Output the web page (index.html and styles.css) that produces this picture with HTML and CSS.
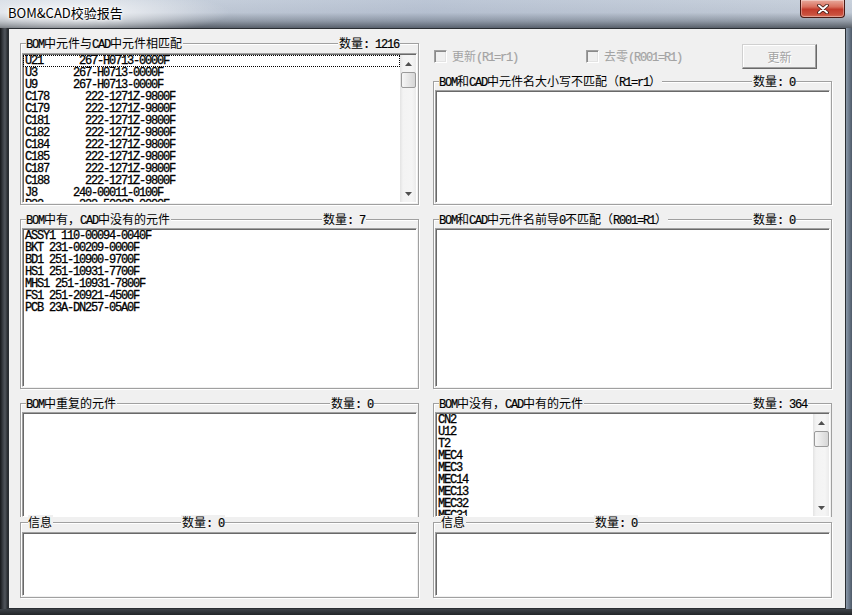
FILE: index.html
```html
<!DOCTYPE html>
<html lang="zh-CN">
<head>
<meta charset="utf-8">
<title>BOM&amp;CAD校验报告</title>
<link rel="stylesheet" href="styles.css">
</head>
<body>
<div class="window">
  <div class="titlebar">
    <span class="title">BOM&amp;CAD校验报告</span>
    <button class="close" aria-label="关闭">
      <svg width="12" height="10" viewBox="0 0 12 10"><path d="M2 1.5 L10 8.5 M10 1.5 L2 8.5" stroke="#3a1510" stroke-width="3.6" stroke-linecap="round"/><path d="M2 1.5 L10 8.5 M10 1.5 L2 8.5" stroke="#ffffff" stroke-width="2" stroke-linecap="round"/></svg>
    </button>
  </div>
  <div class="frame-left"></div>
  <div class="client">
    <div class="col col-left">
      <div class="group g1">
        <span class="gtitle"><span class="m">BOM</span>中元件与<span class="m">CAD</span>中元件相匹配</span>
        <span class="gcount c1">数量<span class="m">: 1216</span></span>
        <div class="listbox">
          <div class="items">
            <div class="row focus">U21      267-H0713-0000F</div>
            <div class="row">U3      267-H0713-0000F</div>
            <div class="row">U9      267-H0713-0000F</div>
            <div class="row">C178      222-1271Z-9800F</div>
            <div class="row">C179      222-1271Z-9800F</div>
            <div class="row">C181      222-1271Z-9800F</div>
            <div class="row">C182      222-1271Z-9800F</div>
            <div class="row">C184      222-1271Z-9800F</div>
            <div class="row">C185      222-1271Z-9800F</div>
            <div class="row">C187      222-1271Z-9800F</div>
            <div class="row">C188      222-1271Z-9800F</div>
            <div class="row">J8      240-00011-0100F</div>
            <div class="row">R22      232-5022B-0000F</div>
          </div>
          <div class="vscroll">
            <div class="sbtn"><svg width="7" height="4" viewBox="0 0 7 4"><polygon points="0,4 7,4 3.5,0" fill="#505050"/></svg></div>
            <div class="thumb"></div>
            <div class="strack"></div>
            <div class="sbtn"><svg width="7" height="4" viewBox="0 0 7 4"><polygon points="0,0 7,0 3.5,4" fill="#505050"/></svg></div>
          </div>
        </div>
      </div>

      <div class="group g2">
        <span class="gtitle"><span class="m">BOM</span>中有，<span class="m">CAD</span>中没有的元件</span>
        <span class="gcount c2">数量<span class="m">: 7</span></span>
        <div class="listbox">
          <div class="items">
            <div class="row">ASSY1 110-00094-0040F</div>
            <div class="row">BKT 231-00209-0000F</div>
            <div class="row">BD1 251-10900-9700F</div>
            <div class="row">HS1 251-10931-7700F</div>
            <div class="row">MHS1 251-10931-7800F</div>
            <div class="row">FS1 251-20921-4500F</div>
            <div class="row">PCB 23A-DN257-05A0F</div>
          </div>
        </div>
      </div>

      <div class="group g3">
        <span class="gtitle"><span class="m">BOM</span>中重复的元件</span>
        <span class="gcount c3">数量<span class="m">: 0</span></span>
        <div class="listbox">
          <div class="items"></div>
        </div>
      </div>

      <div class="group info">
        <span class="gtitle ititle">信息</span>
        <span class="gcount ci">数量<span class="m">: 0</span></span>
        <div class="listbox">
          <div class="items"></div>
        </div>
      </div>
    </div>

    <div class="col col-right">
      <div class="toolbar">
        <label class="chk chk1"><span class="box"></span><span>更新<span class="m">(R1=r1)</span></span></label>
        <label class="chk chk2"><span class="box"></span><span>去零<span class="m">(R001=R1)</span></span></label>
        <button class="btn" disabled>更新</button>
      </div>

      <div class="group g4">
        <span class="gtitle"><span class="m">BOM</span>和<span class="m">CAD</span>中元件名大小写不匹配（<span class="m">R1=r1</span>）</span>
        <span class="gcount cr">数量<span class="m">: 0</span></span>
        <div class="listbox">
          <div class="items"></div>
        </div>
      </div>

      <div class="group g2">
        <span class="gtitle"><span class="m">BOM</span>和<span class="m">CAD</span>中元件名前导<span class="m">0</span>不匹配（<span class="m">R001=R1</span>）</span>
        <span class="gcount cr">数量<span class="m">: 0</span></span>
        <div class="listbox">
          <div class="items"></div>
        </div>
      </div>

      <div class="group g3">
        <span class="gtitle"><span class="m">BOM</span>中没有，<span class="m">CAD</span>中有的元件</span>
        <span class="gcount cr">数量<span class="m">: 364</span></span>
        <div class="listbox">
          <div class="items">
            <div class="row">CN2</div>
            <div class="row">U12</div>
            <div class="row">T2</div>
            <div class="row">MEC4</div>
            <div class="row">MEC3</div>
            <div class="row">MEC14</div>
            <div class="row">MEC13</div>
            <div class="row">MEC32</div>
            <div class="row">MEC31</div>
          </div>
          <div class="vscroll">
            <div class="sbtn"><svg width="7" height="4" viewBox="0 0 7 4"><polygon points="0,4 7,4 3.5,0" fill="#505050"/></svg></div>
            <div class="thumb"></div>
            <div class="strack"></div>
            <div class="sbtn"><svg width="7" height="4" viewBox="0 0 7 4"><polygon points="0,0 7,0 3.5,4" fill="#505050"/></svg></div>
          </div>
        </div>
      </div>

      <div class="group info">
        <span class="gtitle ititle">信息</span>
        <span class="gcount ci">数量<span class="m">: 0</span></span>
        <div class="listbox">
          <div class="items"></div>
        </div>
      </div>
    </div>
  </div>
  <div class="frame-right"></div>
  <div class="frame-bottom"></div>
</div>
</body>
</html>
```

FILE: styles.css
```css
* { box-sizing: border-box; }

html, body {
  margin: 0;
  padding: 0;
}

body {
  width: 852px;
  height: 615px;
  overflow: hidden;
  background: #2f3338;
  font-family: "Noto Sans CJK SC", "Noto Sans", sans-serif;
  font-size: 12px;
  color: #000;
}

.window {
  display: grid;
  grid-template-columns: 8px 838px 6px;
  grid-template-rows: 28px 581px 6px;
  width: 852px;
  height: 615px;
}

/* ---------- title bar ---------- */
.titlebar {
  grid-column: 1 / -1;
  display: flex;
  justify-content: space-between;
  align-items: flex-start;
  background:
    radial-gradient(ellipse 160px 24px at 70px 13px, rgba(255,255,255,0.9), rgba(255,255,255,0) 100%),
    linear-gradient(to right, rgba(120,140,170,0.0) 0, rgba(110,130,170,0.18) 50%, rgba(120,140,170,0.05) 100%),
    linear-gradient(to bottom, #cdd5df 0, #c4ccd7 45%, #949ca6 75%, #565c63 100%);
}

.title {
  padding: 5px 0 0 8px;
  font-size: 13px;
  line-height: 16px;
  color: #000;
  text-shadow: 0 0 6px #fff, 0 0 3px #fff, 0 0 2px #fff;
}

.close {
  width: 45px;
  height: 18px;
  margin-right: 7px;
  padding: 0;
  border: 1px solid #4a1a14;
  border-top: none;
  border-radius: 0 0 4px 4px;
  background: linear-gradient(to bottom, #e8aa9c 0, #d9705e 40%, #c23b2b 55%, #c9503d 85%, #d9705a 100%);
  box-shadow: inset 0 0 0 1px rgba(255,255,255,0.35);
  display: flex;
  align-items: center;
  justify-content: center;
}

.frame-left {
  background: linear-gradient(to right, #15171a 0, #3c4046 3px, #50555c 5px, #24272b 8px);
}

.frame-right {
  background: linear-gradient(to right, #8a98a8 0, #6c7a8b 3px, #4f5a68 6px);
}

.frame-bottom {
  grid-column: 1 / -1;
  background: linear-gradient(to bottom, #3d4248 0, #222528 100%);
}

/* ---------- client area ---------- */
.client {
  border: 1px solid #2a2e33;
  background: #f0f0f0;
  display: flex;
  padding-left: 11px;
  gap: 14px;
}

.col {
  width: 399px;
  display: flex;
  flex-direction: column;
}

.col-left { padding-top: 14px; }
.col-right { padding-top: 15px; }

/* ---------- group boxes ---------- */
.group {
  position: relative;
  border: 1px solid #a0a0a0;
  box-shadow: inset 1px 1px 0 #fff, 1px 1px 0 #fff;
  padding: 8px 1px 1px 1px;
  display: flex;
  flex-direction: column;
}

.g1 { height: 162px; padding-top: 9px; }
.g2 { height: 170px; margin-top: 14px; }
.g3 { height: 114px; margin-top: 14px; border-bottom: none; padding-bottom: 0; box-shadow: inset 1px 1px 0 #fff; }
.g4 { height: 124px; margin-top: 12px; }
.info { height: 76px; margin-top: 5px; padding-top: 9px; }

.gtitle,
.gcount {
  position: absolute;
  top: -8px;
  line-height: 14px;
  background: #f0f0f0;
  white-space: nowrap;
}

.gtitle { left: 5px; padding-right: 1px; }
.ititle { left: 7px; }
.gcount { padding: 0 1px; }

.c1 { left: 317px; }
.c2 { left: 301px; }
.c3 { left: 309px; }
.cr { left: 318px; }
.ci { left: 160px; }

.m {
  font-family: "Liberation Mono", monospace;
  font-size: 12px;
  letter-spacing: -1.2px;
  -webkit-text-stroke: 0.2px currentColor;
}

/* ---------- list boxes ---------- */
.listbox {
  flex: 1;
  min-height: 0;
  background: #fff;
  border: 1px solid;
  border-color: #a0a0a0 #fff #fff #a0a0a0;
  box-shadow: inset 1px 1px 0 #696969;
  padding-top: 1px;
  display: flex;
  overflow: hidden;
}

.items {
  flex: 1;
  min-width: 0;
  overflow: hidden;
  font-family: "Liberation Mono", monospace;
  font-size: 12px;
  letter-spacing: -1.2px;
  line-height: 12px;
  color: #000;
  -webkit-text-stroke: 0.3px #000;
}

.row {
  height: 12px;
  padding-left: 2px;
  white-space: pre;
}

.row.focus {
  outline: 1px dotted #000;
  outline-offset: -1px;
}

.vscroll {
  width: 16px;
  display: flex;
  flex-direction: column;
  background: linear-gradient(to right, #e3e3e3 0, #f3f3f3 3px, #f5f5f5 12px, #ebebeb 16px);
}

.sbtn {
  height: 17px;
  display: flex;
  align-items: center;
  justify-content: center;
}

.thumb {
  height: 16px;
  width: 15px;
  margin-left: 1px;
  border: 1px solid #9a9a9a;
  border-radius: 2px;
  background: linear-gradient(to right, #f6f6f6 0, #e6e6e6 50%, #d6d6d6 100%);
}

.strack { flex: 1; }

/* ---------- toolbar ---------- */
.toolbar {
  height: 25px;
  display: flex;
  align-items: center;
}

.chk {
  display: flex;
  align-items: center;
  gap: 5px;
  color: #a3a3a3;
  white-space: nowrap;
  line-height: 14px;
}

.chk1 { margin-left: 1px; width: 152px; }
.chk2 { width: 156px; }

.box {
  width: 13px;
  height: 13px;
  border: 1px solid;
  border-color: #a0a0a0 #fff #fff #a0a0a0;
  box-shadow: inset 1px 1px 0 #8a8a8a, inset -1px -1px 0 #e3e3e3;
  background: #f0f0f0;
}

.btn {
  width: 75px;
  height: 25px;
  padding: 0;
  border: 1px solid;
  border-color: #d0d0d0 #696969 #696969 #d0d0d0;
  box-shadow: inset -1px -1px 0 #a0a0a0, inset 1px 1px 0 #fff;
  background: #f0f0f0;
  color: #a3a3a3;
  text-shadow: 1px 1px 0 #fff;
  font-family: "Noto Sans CJK SC", sans-serif;
  font-size: 12px;
}
```
